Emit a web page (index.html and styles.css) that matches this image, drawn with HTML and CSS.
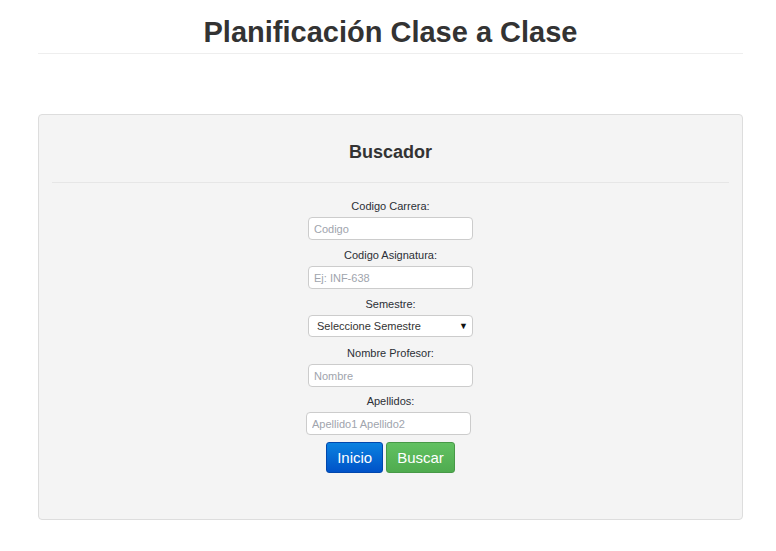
FILE: index.html
```html
<!DOCTYPE html>
<html lang="es">
<head>
<meta charset="utf-8">
<title>Planificación Clase a Clase</title>
<link rel="stylesheet" href="styles.css">
</head>
<body>
<div class="page">
  <h1 class="title">Planificación Clase a Clase</h1>
  <hr class="title-rule">
  <div class="panel">
    <h3 class="panel-title">Buscador</h3>
    <hr class="panel-rule">
    <form class="search-form">
      <div class="field">
        <label class="field-label">Codigo Carrera:</label>
        <input class="text-input" type="text" placeholder="Codigo">
      </div>
      <div class="field">
        <label class="field-label">Codigo Asignatura:</label>
        <input class="text-input" type="text" placeholder="Ej: INF-638">
      </div>
      <div class="field field-select">
        <label class="field-label">Semestre:</label>
        <div class="select-wrap">
          <select class="select-input">
            <option>Seleccione Semestre</option>
          </select>
          <span class="select-arrow">▼</span>
        </div>
      </div>
      <div class="field field-tight">
        <label class="field-label">Nombre Profesor:</label>
        <input class="text-input" type="text" placeholder="Nombre">
      </div>
      <div class="field field-tight">
        <label class="field-label">Apellidos:</label>
        <input class="text-input text-input-shift" type="text" placeholder="Apellido1 Apellido2">
      </div>
      <div class="actions">
        <button type="button" class="btn btn-blue">Inicio</button>
        <button type="button" class="btn btn-green">Buscar</button>
      </div>
    </form>
  </div>
</div>
</body>
</html>
```

FILE: styles.css
```css
html, body {
  margin: 0;
  padding: 0;
  background: #ffffff;
}

body {
  font-family: "Liberation Sans", Arial, sans-serif;
  color: #333333;
}

.page {
  width: 705px;
  margin-left: 38px;
  padding-top: 16px;
}

.title {
  margin: 0;
  font-size: 29px;
  line-height: 32px;
  font-weight: bold;
  text-align: center;
  color: #333333;
}

.title-rule {
  margin: 5px 0 0 0;
  border: 0;
  border-top: 1px solid #eeeeee;
  height: 0;
}

.panel {
  margin-top: 60px;
  background: #f4f4f4;
  border: 1px solid #dddddd;
  border-radius: 4px;
  padding: 0 13px 44px 13px;
  height: 406px;
  box-sizing: border-box;
}

.panel-title {
  margin: 27px 0 0 0;
  font-size: 18px;
  line-height: 20px;
  font-weight: bold;
  text-align: center;
  color: #333333;
}

.panel-rule {
  margin: 20px 0 0 0;
  border: 0;
  border-top: 1px solid #e6e6e6;
  height: 0;
}

.search-form {
  display: flex;
  flex-direction: column;
  align-items: center;
  padding-top: 16px;
}

.field {
  display: flex;
  flex-direction: column;
  align-items: center;
  margin-bottom: 8px;
}

.field-select {
  margin-bottom: 9px;
}

.field-tight {
  margin-bottom: 7px;
}

.field-label {
  font-size: 11px;
  line-height: 14px;
  color: #2b2f36;
  margin-bottom: 4px;
}

.text-input {
  width: 165px;
  height: 23px;
  box-sizing: border-box;
  border: 1px solid #cccccc;
  border-radius: 4px;
  background: #ffffff;
  padding: 0 5px;
  font-family: "Liberation Sans", Arial, sans-serif;
  font-size: 11px;
  color: #555555;
  margin: 0;
}

.text-input::placeholder {
  color: #a0a4ad;
}

.text-input-shift {
  margin-right: 4px;
}

.select-wrap {
  position: relative;
  width: 165px;
  height: 22px;
}

.select-input {
  appearance: none;
  -webkit-appearance: none;
  width: 165px;
  height: 22px;
  box-sizing: border-box;
  border: 1px solid #cccccc;
  border-radius: 4px;
  background: #ffffff;
  padding: 0 20px 0 8px;
  font-family: "Liberation Sans", Arial, sans-serif;
  font-size: 11px;
  color: #333333;
  margin: 0;
}

.select-arrow {
  position: absolute;
  right: 5px;
  top: 5px;
  font-size: 9px;
  line-height: 12px;
  color: #111111;
  pointer-events: none;
}

.actions {
  display: flex;
  gap: 3px;
}

.btn {
  height: 31px;
  box-sizing: border-box;
  padding: 0 10px;
  border-radius: 3px;
  font-family: "Liberation Sans", Arial, sans-serif;
  font-size: 15px;
  color: #ffffff;
  cursor: pointer;
}

.btn-blue {
  background: linear-gradient(#0a82e0, #0052c8);
  border: 1px solid #0047ad;
}

.btn-green {
  background: linear-gradient(#62c162, #4fab4f);
  border: 1px solid #479947;
}
```
